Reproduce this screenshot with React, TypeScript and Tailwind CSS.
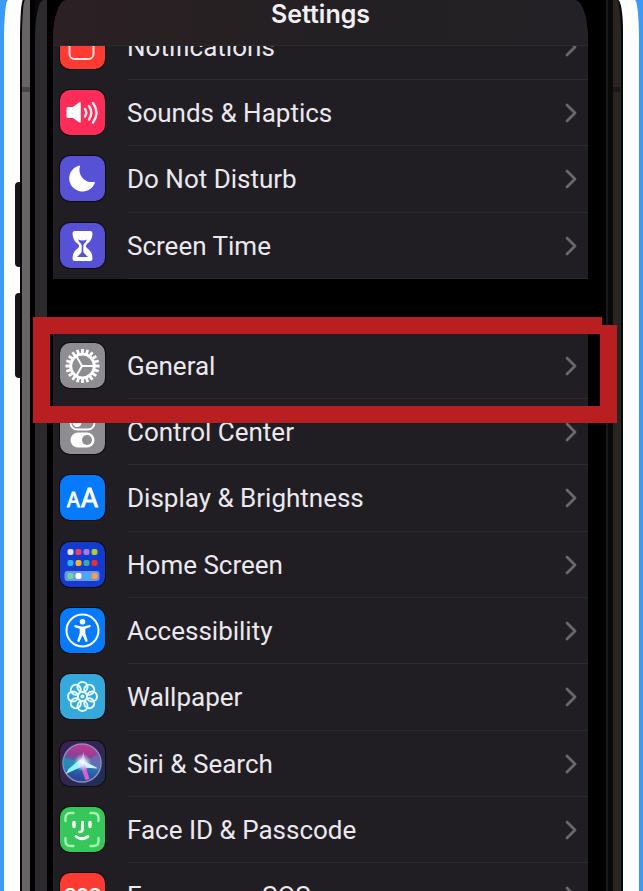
import React from 'react';
import { clsx } from 'clsx';

interface SettingsItem {
  label: string;
  tile: string;
  icon: React.ReactNode;
}

const gearTeeth = Array.from({ length: 20 }, (_, i) => i * 18);
const petals = Array.from({ length: 8 }, (_, i) => i * 45);

const appDots = [
  { x: 8, y: 7, color: '#e3e0f5' },
  { x: 16, y: 7, color: '#f03e63' },
  { x: 24, y: 7, color: '#a878ec' },
  { x: 32, y: 7, color: '#a6d12c' },
  { x: 8, y: 18, color: '#2cb5fa' },
  { x: 16, y: 18, color: '#f9b02b' },
  { x: 24, y: 18, color: '#3ba7ae' },
  { x: 32, y: 18, color: '#e9302f' },
  { x: 8, y: 31, color: '#62e08c' },
  { x: 16, y: 31, color: '#ffffff' },
  { x: 24, y: 31, color: '#29b9fb' },
  { x: 32, y: 31, color: '#f8a13a' }
];

const NotificationsIcon = () => (
  <rect x="10" y="11" width="24" height="24" rx="5" fill="none" stroke="#ffe4e4" strokeWidth="2" />
);

const SoundsIcon = () => (
  <>
    <path d="M7 18.500q0-1.500 1.500-1.500h5l6-4.500q1.800-1.200 1.800 1v18q0 2-1.800.800L13.500 28H8.500Q7 28 7 26.500z" fill="#fff" />
    <g fill="none" stroke="#ffeaf1" strokeWidth="2.400" strokeLinecap="round">
      <path d="M25.500 19q2.500 3.500 0 7.500" />
      <path d="M29.500 16q4.500 6.500 0 13.500" />
      <path d="M33.500 13q7 9.500 0 19.500" />
    </g>
  </>
);

const MoonIcon = () => (
  <path d="M20.500 10.500a.9.9 0 0 0-1.200-.8A13.200 13.200 0 1 0 35.300 27a.9.9 0 0 0-1.200-1.100A12 12 0 0 1 20.500 10.500z" fill="#fff" />
);

const HourglassIcon = () => (
  <>
    <path
      d="M15.500 8h15q2.500 0 2.500 2.200 0 6.800-5 10.300-1.700 1.500-1.700 2.500t1.700 2.500q5 3.500 5 10.300 0 2.200-2.500 2.200h-15q-2.500 0-2.500-2.200 0-6.800 5-10.300 1.700-1.500 1.700-2.500t-1.700-2.500q-5-3.500-5-10.300Q13 8 15.500 8z"
      fill="#fff"
    />
    <path d="M18.500 16.500q2.200 1 4.500 1t4.500-1Q26.500 19 25 20.200q-1.200 1-1.200 3V28q0 1.800 1.700 3l3 3H17.500l3-3q1.700-1.200 1.700-3v-4.800q0-2-1.200-3-1.500-1.200-2.500-3.700z" fill="#5751d5" />
  </>
);

const GearIcon = () => (
  <g stroke="#fff" fill="none">
    {gearTeeth.map((angle) => (
      <path key={angle} d="M23 10.500V6" strokeWidth="2.800" transform={`rotate(${angle} 23 23)`} />
    ))}
    <circle cx="23" cy="23" r="11.800" strokeWidth="2.800" />
    <path d="M22.500 23H35M22.500 23l-6-10.500M22.500 23l-6 10.500" strokeWidth="2" />
  </g>
);

const TogglesIcon = () => (
  <>
    <rect x="11" y="7" width="24" height="13.500" rx="6.700" fill="none" stroke="#fff" strokeWidth="1.800" />
    <circle cx="17.500" cy="13.500" r="4.500" fill="#fff" />
    <rect x="11" y="23.500" width="24" height="15" rx="7.500" fill="#fff" />
    <circle cx="27.500" cy="31" r="5" fill="#8e8d92" />
  </>
);

const TextSizeIcon = () => (
  <g fill="#fff" stroke="#fff" strokeWidth="0.800" className="font-['Inter',sans-serif]">
    <text x="7" y="32" fontSize="20">A</text>
    <text x="21" y="32" fontSize="26">A</text>
  </g>
);

const HomeScreenIcon = () => (
  <>
    <rect x="5" y="29" width="35" height="10" rx="3" fill="#6d93ee" />
    {appDots.map((dot) => (
      <rect key={`${dot.x}-${dot.y}`} x={dot.x} y={dot.y} width="6" height="6" rx="2" fill={dot.color} />
    ))}
  </>
);

const AccessibilityIcon = () => (
  <>
    <circle cx="23" cy="22.500" r="16" fill="none" stroke="#fff" strokeWidth="2" />
    <circle cx="23" cy="13.800" r="2.800" fill="#fff" />
    <path
      d="M16 17l5 1.200q2 .4 4 0l5-1.200q1-.1 1.200.8t-.8 1.400l-4.600 1.500v4.600l2.300 7q.2 1.300-.9 1.600t-1.500-.8L23 27l-2.700 6.100q-.4 1.100-1.500.8t-.9-1.600l2.300-7v-4.600L15.600 19.200q-1-.5-.8-1.400t1.200-.8z"
      fill="#fff"
    />
  </>
);

const FlowerIcon = () => (
  <g fill="none" stroke="#e8fbff" strokeWidth="2">
    {petals.map((angle) => (
      <circle key={angle} cx="23" cy="13" r="5" transform={`rotate(${angle} 23 22.500)`} />
    ))}
    <circle cx="23" cy="22.500" r="4.500" strokeWidth="1.300" />
    <circle cx="23" cy="22.500" r="2" fill="#e8fbff" stroke="none" />
  </g>
);

const SiriIcon = () => (
  <>
    <defs>
      <linearGradient id="siri-orb" x1="0.600" y1="0" x2="0.400" y2="1">
        <stop offset="0" stopColor="#c93591" />
        <stop offset="0.350" stopColor="#8b4194" />
        <stop offset="0.550" stopColor="#2c78ad" />
        <stop offset="1" stopColor="#283c9c" />
      </linearGradient>
      <radialGradient id="siri-glow">
        <stop offset="0" stopColor="#fff" />
        <stop offset="0.350" stopColor="#e5f9ff" stopOpacity="0.800" />
        <stop offset="1" stopColor="#9be3ff" stopOpacity="0" />
      </radialGradient>
    </defs>
    <circle cx="22.500" cy="22" r="19" fill="url(#siri-orb)" stroke="#8790bd" strokeWidth="1.500" />
    <path d="M22 22L4 16q-1 8 2 14z" fill="#2596be" opacity="0.700" />
    <path d="M22 22l17-9q3 8 0 16z" fill="#6573b5" opacity="0.800" />
    <path d="M21 18L9 28l-3 5 18-8z" fill="#8cf3ff" />
    <path d="M22 19l15 8-13-1z" fill="#d3f7ff" stroke="#c6f3ff" />
    <path d="M20 22l6 17 4-1-5-16z" fill="#e05ccb" />
    <path d="M21 22l3-11 2 11z" fill="#e394d2" />
    <circle cx="23" cy="21.500" r="9" fill="url(#siri-glow)" />
  </>
);

const FaceIdIcon = () => (
  <g fill="none" strokeLinecap="round" strokeLinejoin="round">
    <path
      d="M6 14v-3q0-5 5-5h3M31 6h3q5 0 5 5v3M39 31v3q0 5-5 5h-3M14 39h-3q-5 0-5-5v-3"
      stroke="#a5f0b4"
      strokeWidth="2.400"
    />
    <path d="M14.500 15.500v4M30.500 15.500v4" stroke="#fff" strokeWidth="3.400" />
    <path d="M23 15v7.500q0 2.500-3 2.500" stroke="#fff" strokeWidth="2.600" />
    <path d="M16.500 29.500q5.800 4.500 12 0" stroke="#fff" strokeWidth="2.800" />
  </g>
);

const SosIcon = () => (
  <text x="23" y="28" fontSize="19" fontWeight="700" fill="#fff" textAnchor="middle" className="font-['Roboto',sans-serif]">
    SOS
  </text>
);

const alertItems: SettingsItem[] = [
  { label: 'Notifications', tile: 'bg-[#fe3b33]', icon: <NotificationsIcon /> },
  { label: 'Sounds & Haptics', tile: 'bg-[#fe2c59]', icon: <SoundsIcon /> },
  { label: 'Do Not Disturb', tile: 'bg-[#5751d5]', icon: <MoonIcon /> },
  { label: 'Screen Time', tile: 'bg-[#5751d5]', icon: <HourglassIcon /> }
];

const generalItems: SettingsItem[] = [
  { label: 'General', tile: 'bg-[#8e8d92]', icon: <GearIcon /> },
  { label: 'Control Center', tile: 'bg-[#8e8d92]', icon: <TogglesIcon /> },
  { label: 'Display & Brightness', tile: 'bg-[#067afd]', icon: <TextSizeIcon /> },
  { label: 'Home Screen', tile: 'bg-[#133bd0]', icon: <HomeScreenIcon /> },
  { label: 'Accessibility', tile: 'bg-[#067afd]', icon: <AccessibilityIcon /> },
  { label: 'Wallpaper', tile: 'bg-[#35a9dc]', icon: <FlowerIcon /> },
  { label: 'Siri & Search', tile: 'bg-linear-to-br from-[#3c1d50] to-[#1b3056]', icon: <SiriIcon /> },
  { label: 'Face ID & Passcode', tile: 'bg-[#35c759]', icon: <FaceIdIcon /> },
  { label: 'Emergency SOS', tile: 'bg-[#fe3b33]', icon: <SosIcon /> }
];

const SettingsGroup: React.FC<{ items: SettingsItem[]; className?: string }> = ({ items, className }) => (
  <ul className={clsx('bg-[#211e23]', className)}>
    {items.map((item) => (
      <li key={item.label} className="h-[66px] nth-[3n]:h-[67px]">
        <a href="#" className="flex h-full items-center gap-[22px] pl-[7px]">
          <span className={clsx('mb-[2px] size-[45px] shrink-0 overflow-hidden rounded-[10px] ring-1 ring-black/60', item.tile)}>
            <svg viewBox="0.5 0 45 45" className="size-full" aria-hidden="true">
              {item.icon}
            </svg>
          </span>
          <span className="flex h-full flex-1 items-center justify-between border-b border-[#2b2a2f] pr-[11px]">
            <span className="text-[26px] leading-8 whitespace-nowrap text-[#ebe8ee]">{item.label}</span>
            <svg viewBox="0 0 12 20" className="h-5 w-3" fill="none" aria-hidden="true">
              <path d="M2 2l8 8-8 8" stroke="#69676c" strokeWidth="2.800" strokeLinecap="round" strokeLinejoin="round" />
            </svg>
          </span>
        </a>
      </li>
    ))}
  </ul>
);

const App: React.FC = () => {
  return (
    <div className="h-screen overflow-hidden bg-[#3b99f7] font-['Roboto',sans-serif]">
      <div className="mx-1 h-full rounded-tl-[4px_40px] rounded-tr-[4px_40px] bg-white px-4">
        <div className="relative h-full">
          {/* Volume buttons */}
          <div className="absolute top-[182px] -left-[5px] h-[85px] w-2 rounded-l-sm bg-[#171514]" />
          <div className="absolute top-[293px] -left-[5px] h-[85px] w-2 rounded-l-sm bg-[#171514]" />

          {/* Phone shell, from the outer edge to the bezel */}
          <div className="relative h-full rounded-tl-[3px_40px] rounded-tr-[5px_30px] border-x-2 border-[#090808] bg-[#090808]">
            <div className="h-full rounded-tl-[3px_40px] rounded-tr-[4px_40px] border-r-8 border-l-8 border-r-[#2a2523] border-l-[#696566]">
              <div className="h-full border-r-[5px] border-l-[5px] border-r-[#0b0a0b] border-l-black">
                <div className="h-full rounded-tl-[8px_40px] border-r-2 border-l-[12px] border-r-[#1a191b] border-l-[#2b292c]">
                  <div className="h-full bg-black pr-[18px] pl-[6px]">
                    <main className="h-full overflow-hidden rounded-tl-[13px_40px] rounded-tr-[13px_40px]">
                      <header className="relative z-10 flex h-[46px] items-start justify-center border-b border-[#2b2a2f] bg-linear-to-r from-[#2c2023] via-[#232023] to-[#232125]">
                        <h1 className="font-['Inter',sans-serif] text-[25px] leading-7 font-semibold text-[#f2eff4]">Settings</h1>
                      </header>
                      <SettingsGroup items={alertItems} className="-mt-8" />
                      <SettingsGroup items={generalItems} className="mt-[54px]" />
                    </main>
                  </div>
                </div>
              </div>
            </div>
          </div>

          {/* Antenna bands */}
          <div className="absolute top-[87px] left-[2px] h-[5px] w-2 bg-[#4a4748]" />
          <div className="absolute top-[87px] right-[3px] h-[5px] w-[7px] bg-[#1b1818]" />

          {/* Highlight around General */}
          <div className="absolute top-[317px] right-[21px] left-[13px] h-[106px] border-y-[17px] border-l-[17px] border-[#b91f20]" />
          <div className="absolute top-[325px] right-[6px] h-[98px] w-[17px] bg-[#b91f20]" />
        </div>
      </div>
    </div>
  );
};

export default App;
